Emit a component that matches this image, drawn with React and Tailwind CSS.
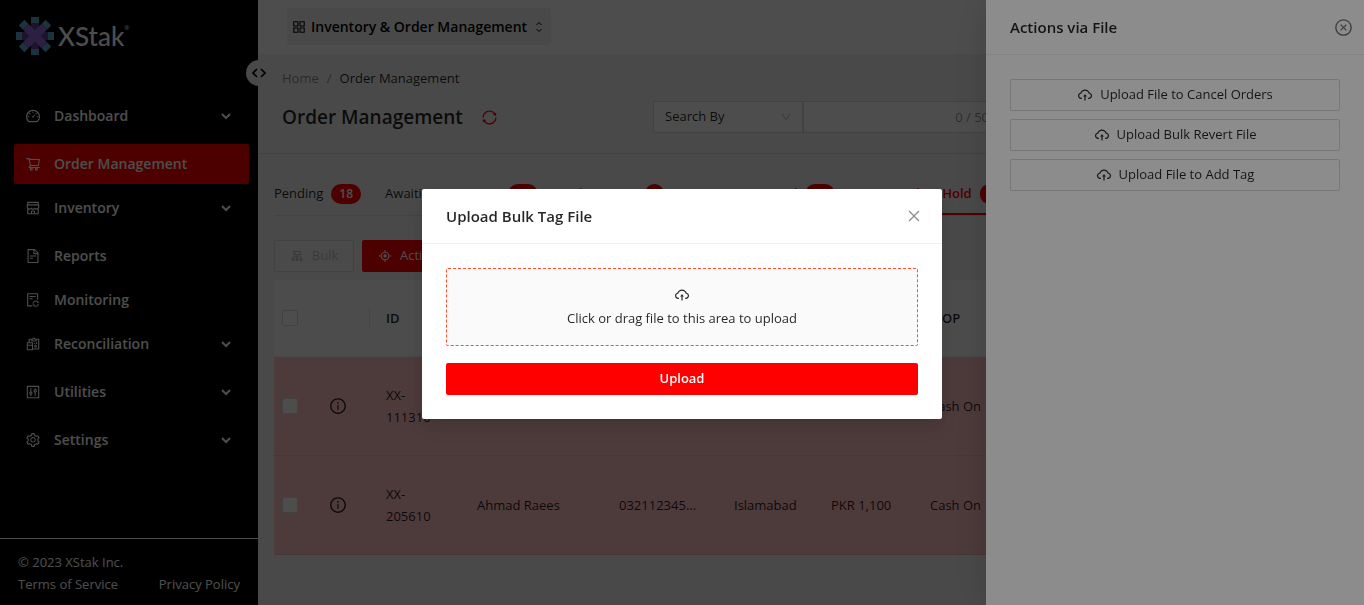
import React from 'react';
import {
  AiOutlineDashboard,
  AiOutlineShoppingCart,
  AiOutlineShop,
  AiOutlineFileText,
  AiOutlineFileSync,
  AiOutlineReconciliation,
  AiOutlineControl,
  AiOutlineSetting,
  AiOutlineAppstore,
  AiOutlineSync,
  AiOutlineDown,
  AiOutlineCluster,
  AiOutlineAim,
  AiOutlineInfoCircle,
  AiOutlineCloudUpload,
  AiOutlineCloseCircle,
  AiOutlineClose,
} from 'react-icons/ai';

const menu = [
  { label: 'Dashboard', icon: AiOutlineDashboard, sub: true },
  { label: 'Order Management', icon: AiOutlineShoppingCart, active: true },
  { label: 'Inventory', icon: AiOutlineShop, sub: true },
  { label: 'Reports', icon: AiOutlineFileText },
  { label: 'Monitoring', icon: AiOutlineFileSync },
  { label: 'Reconciliation', icon: AiOutlineReconciliation, sub: true },
  { label: 'Utilities', icon: AiOutlineControl, sub: true },
  { label: 'Settings', icon: AiOutlineSetting, sub: true },
];

const tabs = [
  { label: 'Pending', count: 18 },
  { label: 'Awaiting Activation', count: 12 },
  { label: 'Fails By ERM', count: 4 },
  { label: 'Awaiting Approval', count: 27 },
  { label: 'Approved By Hold', count: 2, active: true },
];

const orders = [
  { id: 'XX-111310', name: 'Ahmad Raees', phone: '032112345...', city: 'Islamabad', amount: 'PKR 1,100', mop: 'Cash On' },
  { id: 'XX-205610', name: 'Ahmad Raees', phone: '032112345...', city: 'Islamabad', amount: 'PKR 1,100', mop: 'Cash On' },
];

const fileActions = ['Upload File to Cancel Orders', 'Upload Bulk Revert File', 'Upload File to Add Tag'];

const Logo = () => (
  <div className="flex items-center gap-1 text-white">
    <svg width="38" height="38" viewBox="0 0 38 38" aria-hidden="true">
      {[0, 45, 90, 135, 180, 225, 270, 315].map((a) => (
        <g key={a} transform={`rotate(${a} 19 19)`}>
          <rect x="15" y="0" width="8" height="6" fill="#5aa5d2" />
          <rect x="15" y="6" width="8" height="10" fill={a % 90 === 0 ? '#5c4290' : '#9468d8'} />
        </g>
      ))}
      <path d="M8.4 14 14 8.4l5 5 5-5 5.600 5.600-5 5 5 5L24 29.600l-5-5-5 5L8.400 24l5-5z" fill="#9468d8" />
    </svg>
    <span className="font-['Lato'] text-[26px] leading-9 font-medium">XStak</span>
    <span className="mb-4 -ml-1 text-[6px] leading-none">®</span>
  </div>
);

const Chevron = () => (
  <svg className="ml-auto" width="10" height="7" viewBox="0 0 10 7" fill="none" stroke="currentColor" strokeWidth="2" aria-hidden="true">
    <path d="M1 1l4 4 4-4" />
  </svg>
);

const Sidebar = () => (
  <aside className="relative flex w-[258px] shrink-0 flex-col bg-black text-white">
    <div className="px-4 pt-[17px]">
      <Logo />
    </div>
    <button
      aria-label="Collapse menu"
      className="absolute top-[60px] -right-[14px] z-1 flex size-[26px] items-center justify-center rounded-full bg-[#f2f2f2] text-black"
    >
      <svg width="14" height="10" viewBox="0 0 14 10" fill="none" stroke="currentColor" strokeWidth="1.600" aria-hidden="true">
        <path d="M5 1L1 5l4 4M9 1l4 4-4 4" />
      </svg>
    </button>

    <nav className="mt-[41px] pr-[9px] pl-[14px]">
      {menu.map(({ label, icon: Icon, sub, active }) => (
        <a
          key={label}
          href="#"
          className={`flex h-10 items-center rounded-xs pr-[18px] pl-[11px] text-sm font-semibold ${sub ? 'mb-2' : 'mb-1'} ${active ? 'bg-[red]' : ''}`}
        >
          <Icon size={16} className="mr-[13px]" />
          {label}
          {sub && <Chevron />}
        </a>
      ))}
    </nav>

    <footer className="mt-auto border-t border-white px-[18px] pt-3 pb-[10px] text-[13px] leading-[22px]">
      <p>© 2023 XStak Inc.</p>
      <div className="flex justify-between">
        <a href="#">Terms of Service</a>
        <a href="#">Privacy Policy</a>
      </div>
    </footer>
  </aside>
);

const PageHeader = () => (
  <div className="h-[100px] border-b border-[#d9d9d9] px-6 pt-[13px]">
    <nav className="flex gap-2 text-[13px] leading-[22px]">
      <a href="#" className="text-black/45">Home</a>
      <span className="text-black/45">/</span>
      <span>Order Management</span>
    </nav>
    <div className="mt-3 flex items-center">
      <h1 className="text-[19px] leading-8 font-semibold text-black/85">Order Management</h1>
      <button aria-label="Refresh" className="ml-[18px] text-[red]">
        <AiOutlineSync size={17} />
      </button>
      <div className="ml-auto flex w-[687px]">
        <div className="relative w-[150px]">
          <select
            aria-label="Search By"
            className="h-8 w-full appearance-none border border-[#d9d9d9] bg-white px-[11px] text-[13px] text-black/85"
          >
            <option>Search By</option>
          </select>
          <AiOutlineDown size={12} className="absolute top-[10px] right-[11px] text-black/25" />
        </div>
        <div className="relative w-[200px]">
          <input aria-label="Search orders" className="h-8 w-full border border-[#d9d9d9] bg-white px-3" />
          <span className="absolute top-[5px] right-[14px] text-[13px] leading-[22px] text-black/45">0 / 50</span>
        </div>
      </div>
    </div>
  </div>
);

const Tabs = () => (
  <div role="tablist" className="flex h-[62px] items-end gap-6 overflow-hidden border-b border-[#dcdcdc]">
    {tabs.map((tab) => (
      <button
        key={tab.label}
        role="tab"
        aria-selected={!!tab.active}
        className={`flex h-10 shrink-0 items-center gap-2 border-b-2 text-[13px] ${tab.active ? 'border-[red] font-semibold text-[red]' : 'border-transparent'}`}
      >
        {tab.label}
        <span className={`rounded-full bg-[red] text-xs leading-5 font-semibold text-white ${tab.count > 9 ? 'px-2' : 'px-[6px]'}`}>
          {tab.count}
        </span>
      </button>
    ))}
  </div>
);

const Checkbox = ({ label }) => (
  <input type="checkbox" aria-label={label} className="mx-auto block size-4 appearance-none rounded-xs border border-[#d9d9d9] bg-white" />
);

const OrdersTable = () => (
  <table className="mt-2 w-full table-fixed text-left text-[13px] leading-[22px]">
    <colgroup>
      <col className="w-8" />
      <col className="w-16" />
      <col className="w-[91px]" />
      <col className="w-[142px]" />
      <col className="w-[115px]" />
      <col className="w-[97px]" />
      <col className="w-[99px]" />
      <col />
    </colgroup>
    <thead className="bg-[#fafafa]">
      <tr className="h-[76px] border-b border-[#f0f0f0]">
        <th><Checkbox label="Select all orders" /></th>
        <th>
          <div className="h-[22px] border-r border-[#e6e6e6]" />
        </th>
        {['ID', 'NAME', 'PHONE', 'CITY', 'AMOUNT', 'MOP'].map((h) => (
          <th key={h} className="px-4 font-semibold">{h}</th>
        ))}
      </tr>
    </thead>
    <tbody className="bg-[#ffc0c0]">
      {orders.map((o) => (
        <tr key={o.id} className="h-[99px] border-b border-[#e8b4b4]">
          <td><Checkbox label={`Select ${o.id}`} /></td>
          <td><AiOutlineInfoCircle size={18} className="mx-auto" /></td>
          <td className="px-4">{o.id}</td>
          <td className="px-4">{o.name}</td>
          <td className="px-4">{o.phone}</td>
          <td className="px-4 whitespace-nowrap">{o.city}</td>
          <td className="px-4 whitespace-nowrap">{o.amount}</td>
          <td className="px-4">{o.mop}</td>
        </tr>
      ))}
    </tbody>
  </table>
);

const Main = () => (
  <main className="min-w-0 flex-1 bg-[#f0f2f5] text-black/85">
    <header className="h-[54px] bg-white pt-2 pl-[29px]">
      <button className="flex h-[37px] items-center gap-1 rounded-sm bg-[#f2f2f2] pr-2 pl-1 text-sm font-semibold text-black">
        <AiOutlineAppstore size={16} />
        Inventory &amp; Order Management
        <svg className="ml-1" width="8" height="12" viewBox="0 0 8 12" fill="none" stroke="currentColor" aria-hidden="true">
          <path d="M1.500 4L4 1.500 6.500 4M1.500 8L4 10.500 6.500 8" />
        </svg>
      </button>
    </header>
    <PageHeader />
    <div className="px-4">
      <Tabs />
      <div className="mt-6 flex gap-2 text-[13px]">
        <button disabled className="flex h-8 w-20 items-center justify-center gap-2 border border-[#d9d9d9] bg-[#f5f5f5] text-black/25">
          <AiOutlineCluster size={14} />
          Bulk
        </button>
        <button className="flex h-8 items-center gap-2 rounded-xs bg-[red] px-4 text-white">
          <AiOutlineAim size={14} />
          Actions
        </button>
      </div>
      <OrdersTable />
    </div>
  </main>
);

const FileDrawer = () => (
  <div className="fixed inset-0 z-10 flex justify-end overflow-hidden bg-black/45">
    <section className="w-[378px] bg-white shadow-[-6px_0_16px_-8px_rgba(0,0,0,0.08),-9px_0_28px_0_rgba(0,0,0,0.05),-12px_0_48px_16px_rgba(0,0,0,0.03)]">
      <div className="flex h-[55px] items-center justify-between border-b border-[#f0f0f0] pr-[11px] pl-6">
        <h2 className="text-[15px] font-semibold text-black/85">Actions via File</h2>
        <button aria-label="Close drawer" className="text-black/55">
          <AiOutlineCloseCircle size={19} />
        </button>
      </div>
      <div className="flex flex-col gap-2 p-6">
        {fileActions.map((label) => (
          <button
            key={label}
            className="flex h-8 items-center justify-center gap-[7px] rounded-xs border border-[#d9d9d9] text-[13px] text-black/85"
          >
            <AiOutlineCloudUpload size={16} />
            {label}
          </button>
        ))}
      </div>
    </section>
  </div>
);

const UploadModal = () => (
  <div className="fixed inset-0 z-20 flex items-start justify-center bg-black/45 pt-[189px]">
    <div
      role="dialog"
      aria-label="Upload Bulk Tag File"
      className="w-[520px] rounded-xs bg-white shadow-[0_3px_6px_-4px_rgba(0,0,0,0.12),0_6px_16px_0_rgba(0,0,0,0.08),0_9px_28px_8px_rgba(0,0,0,0.05)]"
    >
      <div className="flex h-[55px] items-center justify-between border-b border-[#f0f0f0] pr-5 pl-6">
        <h2 className="text-[15px] font-semibold text-black/85">Upload Bulk Tag File</h2>
        <button aria-label="Close" className="text-black/45">
          <AiOutlineClose size={16} />
        </button>
      </div>
      <div className="p-6">
        <button className="flex h-[78px] w-full flex-col items-center justify-center gap-1 rounded-xs border border-dashed border-[#ff4d2e] bg-[#fafafa] pt-[2px] text-[13px] leading-[22px] text-black/85">
          <AiOutlineCloudUpload size={16} />
          Click or drag file to this area to upload
        </button>
        <button className="mt-[17px] h-8 w-full rounded-xs bg-[red] text-[13px] font-semibold text-white">Upload</button>
      </div>
    </div>
  </div>
);

const App = () => {
  return (
    <div className="flex min-h-screen font-['Open_Sans',sans-serif]">
      <Sidebar />
      <Main />
      <FileDrawer />
      <UploadModal />
    </div>
  );
};

export default App;
